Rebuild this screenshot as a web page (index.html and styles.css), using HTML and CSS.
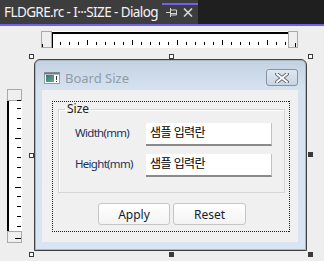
FILE: index.html
```html
<!DOCTYPE html>
<html lang="ko">
<head>
    <meta charset="UTF-8">
    <title>FLDGRE.rc - Dialog</title>
    <link rel="stylesheet" href="styles.css">
</head>
<body>

    <div class="topbar">
        <div class="tab">
            <span class="tab-title">FLDGRE.rc - I···SIZE - Dialog</span>
            <svg class="tab-pin" width="12" height="10" viewBox="0 0 12 10">
                <path d="M0 5.5h4M4.5 1v9M4.5 3h6v5h-6M5 6.5h5.5" stroke="#d6d6d6" stroke-width="1" fill="none"/>
            </svg>
            <svg class="tab-close" width="10" height="9" viewBox="0 0 10 9">
                <path d="M1 0.5l8 8M9 0.5l-8 8" stroke="#d6d6d6" stroke-width="1.6" fill="none"/>
            </svg>
        </div>
        <div class="tab-accent"></div>
    </div>

    <div class="workspace">
        <svg class="hruler" width="257" height="17" viewBox="0 0 257 17">
            <rect x="0.5" y="0.5" width="10" height="16" fill="#efefef" stroke="#a9a9a9"/>
            <rect x="1" y="13" width="1" height="3" fill="#000"/>
            <rect x="11" y="0" width="236" height="17" fill="#fff"/>
            <rect x="11" y="1" width="236" height="2" fill="#000"/>
            <rect x="11" y="1" width="1" height="16" fill="#000"/>
            <g id="hticks" fill="#000"></g>
            <rect x="247.5" y="0.5" width="9" height="16" fill="#efefef" stroke="#a9a9a9"/>
            <rect x="254" y="12" width="1" height="4" fill="#000"/>
        </svg>

        <div class="stage">
            <svg class="vruler" width="15" height="154" viewBox="0 0 15 154">
                <rect x="0.5" y="0.5" width="14" height="11" fill="#efefef" stroke="#a9a9a9"/>
                <rect x="10" y="11" width="4" height="1" fill="#000"/>
                <rect x="0" y="12" width="15" height="130" fill="#fff"/>
                <rect x="0" y="12" width="2" height="130" fill="#000"/>
                <g id="vticks" fill="#000"></g>
                <rect x="0.5" y="142.5" width="14" height="11" fill="#efefef" stroke="#a9a9a9"/>
                <rect x="8" y="149" width="6" height="1" fill="#000"/>
            </svg>

            <div class="selection">
                <span class="handle tl"></span>
                <span class="handle tc"></span>
                <span class="handle tr"></span>
                <span class="handle ml"></span>
                <span class="handle mr on"></span>
                <span class="handle bl"></span>
                <span class="handle bc on"></span>
                <span class="handle br on"></span>

                <div class="dialog">
                    <div class="caption">
                        <svg class="caption-icon" width="16" height="12" viewBox="0 0 16 12">
                            <defs>
                                <linearGradient id="ig" x1="0" y1="0" x2="1" y2="1">
                                    <stop offset="0" stop-color="#3b6f8a"/>
                                    <stop offset="1" stop-color="#5fb07a"/>
                                </linearGradient>
                            </defs>
                            <rect x="0.5" y="0.5" width="15" height="11" fill="#fff" stroke="#9a9a9a"/>
                            <rect x="0.5" y="0.5" width="15" height="2" fill="#6d7a86"/>
                            <rect x="2" y="3" width="8" height="7" fill="url(#ig)"/>
                            <rect x="12" y="4" width="1" height="4" fill="#333"/>
                            <rect x="12" y="9" width="1" height="1" fill="#333"/>
                        </svg>
                        <span class="caption-title">Board Size</span>
                        <button class="caption-close">
                            <svg width="14" height="10" viewBox="0 0 14 10">
                                <path d="M2 1l10 8M12 1l-10 8" stroke="#5b6470" stroke-width="3.6" stroke-linecap="square" fill="none"/>
                                <path d="M2 1l10 8M12 1l-10 8" stroke="#fff" stroke-width="1.8" stroke-linecap="square" fill="none"/>
                            </svg>
                        </button>
                    </div>

                    <div class="client">
                        <div class="focus-rect">
                            <fieldset class="group">
                                <legend>Size</legend>
                                <div class="field">
                                    <label>Width(mm)</label>
                                    <div class="edit">샘플 입력란</div>
                                </div>
                                <div class="field">
                                    <label>Height(mm)</label>
                                    <div class="edit">샘플 입력란</div>
                                </div>
                            </fieldset>
                            <div class="buttons">
                                <button class="btn apply">Apply</button>
                                <button class="btn reset">Reset</button>
                            </div>
                        </div>
                    </div>
                </div>
            </div>
        </div>
    </div>

    <script>
        // ruler ticks, one every 9px, a long one every fifth
        const ns = 'http://www.w3.org/2000/svg';

        function tick(group, x, y, w, h) {
            const r = document.createElementNS(ns, 'rect');
            r.setAttribute('x', x);
            r.setAttribute('y', y);
            r.setAttribute('width', w);
            r.setAttribute('height', h);
            group.appendChild(r);
        }

        const hticks = document.getElementById('hticks');
        for (let k = -3; k <= 22; k++) {
            const x = 46 + 9 * k;
            const long = k % 5 === 0;
            tick(hticks, x, long ? 9 : 11, 1, long ? 5 : 3);
        }

        const vticks = document.getElementById('vticks');
        for (let k = -3; k <= 9; k++) {
            const y = Math.round(48.5 + 9.8 * k);
            const long = k % 5 === 0;
            tick(vticks, long ? 8 : 10, y, long ? 6 : 4, 1);
        }
    </script>

</body>
</html>
```

FILE: styles.css
```css
body {
    margin: 0;
    width: 324px;
    height: 261px;
    overflow: hidden;
    background-color: #eeeeee;
    font-family: "Noto Sans", "Noto Sans CJK KR", sans-serif;
    color: #1e2f4d;
}
.topbar {
    display: flex;
    height: 24px;
    background-color: #1f1f1f;
    border-bottom: 2px solid #7160e8;
}
.tab {
    position: relative;
    display: flex;
    align-items: center;
    width: 194px;
    padding-left: 4px;
    background-color: #3d3d3d;
}
.tab-title {
    color: #f4f4f4;
    font-size: 13.5px;
    white-space: nowrap;
    letter-spacing: -0.6px;
}
.tab-pin {
    margin-left: 8px;
}
.tab-close {
    margin-left: 5px;
}
.tab-accent {
    position: absolute;
    left: 162px;
    top: 3px;
    width: 36px;
    height: 2px;
    background-color: #7160e8;
}
.workspace {
    padding-top: 5px;
}
.hruler {
    display: block;
    margin-left: 41px;
}
.stage {
    display: flex;
    align-items: flex-start;
}
.vruler {
    display: block;
    margin: 41px 0 0 7px;
}
.selection {
    position: relative;
    margin: 11px 0 0 12px;
}
.handle {
    position: absolute;
    width: 3px;
    height: 3px;
    border: 1px solid #3a3a3a;
    background: #fff;
}
.handle.on {
    background: #3a3a3a;
}
.handle.tl { left: -5px; top: -5px; }
.handle.tc { left: 135px; top: -5px; }
.handle.tr { left: 274px; top: -5px; }
.handle.ml { left: -5px; top: 94px; }
.handle.mr { left: 274px; top: 93px; }
.handle.bl { left: -5px; top: 193px; }
.handle.bc { left: 135px; top: 193px; }
.handle.br { left: 274px; top: 193px; }

.dialog {
    width: 271px;
    height: 190px;
    border: 1px solid #404040;
    border-radius: 6px 6px 0 0;
    background: linear-gradient(#c3d2e2, #d6e2ef 30px, #d9e5f2);
    box-shadow: inset 0 0 0 1px #a9b6c4;
}
.caption {
    display: flex;
    align-items: center;
    height: 25px;
    padding: 5px 0 0 9px;
}
.caption-title {
    margin-left: 5px;
    font-size: 13px;
    color: #8d9caa;
}
.caption-close {
    display: flex;
    align-items: center;
    justify-content: center;
    width: 32px;
    height: 17px;
    margin: 0 8px 0 auto;
    padding: 0;
    border: 1px solid #8493a6;
    border-radius: 3px;
    background: linear-gradient(#dfe7f0, #c8d5e3);
}
.client {
    width: 246px;
    height: 141px;
    margin-left: 7px;
    padding: 11px 0 0 10px;
    background-color: #f0f0f0;
}
.focus-rect {
    box-sizing: border-box;
    width: 238px;
    height: 131px;
    padding: 1px;
    background:
        repeating-linear-gradient(90deg, #0000ff 0 1px, transparent 1px 2px) top / 100% 1px no-repeat,
        repeating-linear-gradient(90deg, #0000ff 0 1px, transparent 1px 2px) bottom / 100% 1px no-repeat,
        repeating-linear-gradient(180deg, #0000ff 0 1px, transparent 1px 2px) left / 1px 100% no-repeat,
        repeating-linear-gradient(180deg, #0000ff 0 1px, transparent 1px 2px) right / 1px 100% no-repeat;
}
.group {
    box-sizing: border-box;
    width: 227px;
    height: 91px;
    margin: 0 0 0 5px;
    padding: 0 0 0 16px;
    border: 1px solid #d5d5d5;
    box-shadow: inset 1px 1px 0 #ffffff;
}
.group legend {
    margin-left: -10px;
    padding: 0 2px;
    font-size: 12px;
    line-height: 14px;
    color: #1a1a1a;
}
.field {
    display: flex;
    align-items: center;
    margin-top: 7px;
}
.field + .field {
    margin-top: 8px;
}
.field label {
    width: 71px;
    padding-bottom: 4px;
    font-size: 11.5px;
    letter-spacing: -0.7px;
    color: #1e3356;
}
.edit {
    box-sizing: border-box;
    width: 126px;
    height: 23px;
    padding: 1px 0 0 4px;
    background-color: #ffffff;
    border-right: 1px solid #c2c2c2;
    border-bottom: 2px solid #8a8a8a;
    font-family: "Noto Sans CJK KR", sans-serif;
    font-size: 12px;
    line-height: 16px;
    letter-spacing: -0.6px;
    color: #000;
}
.buttons {
    display: flex;
    gap: 3px;
    margin: 10px 0 0 45px;
}
.btn {
    height: 22px;
    padding: 0;
    border: 1px solid #c6c6c6;
    border-radius: 3px;
    background: linear-gradient(#ffffff, #f3f3f3);
    font-family: "Noto Sans", sans-serif;
    font-size: 12px;
    color: #111c33;
}
.btn.apply {
    width: 72px;
}
.btn.reset {
    width: 73px;
}
```
